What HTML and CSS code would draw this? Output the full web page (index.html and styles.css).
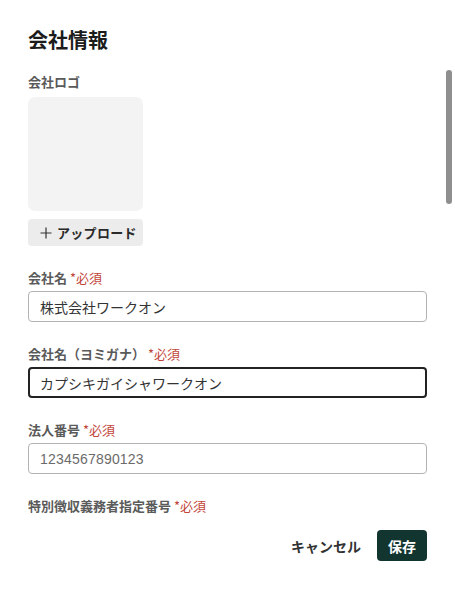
FILE: index.html
```html
<!DOCTYPE html>
<html lang="ja">
<head>
<meta charset="utf-8">
<link rel="stylesheet" href="styles.css">
</head>
<body>
<div class="panel">
  <h1 class="title">会社情報</h1>
  <div class="label label-logo">会社ロゴ</div>
  <div class="logo-box"></div>
  <button class="upload-btn" type="button">
    <svg class="plus" width="12" height="12" viewBox="0 0 12 12"><path d="M6 0.5V11.5M0.5 6H11.5" stroke="#333" stroke-width="1.2" fill="none"/></svg>
    <span>アップロード</span>
  </button>

  <div class="field">
    <div class="label">会社名 <span class="req">*必須</span></div>
    <div class="input">株式会社ワークオン</div>
  </div>
  <div class="field">
    <div class="label">会社名（ヨミガナ） <span class="req">*必須</span></div>
    <div class="input input-focus">カプシキガイシャワークオン</div>
  </div>
  <div class="field">
    <div class="label">法人番号 <span class="req">*必須</span></div>
    <div class="input input-muted">1234567890123</div>
  </div>
  <div class="field">
    <div class="label">特別徴収義務者指定番号 <span class="req">*必須</span></div>
  </div>

  <div class="actions">
    <button class="cancel-btn" type="button">キャンセル</button>
    <button class="save-btn" type="button">保存</button>
  </div>
  <div class="scrollbar"></div>
</div>
</body>
</html>
```

FILE: styles.css
```css
* { box-sizing: border-box; }
html, body {
  margin: 0;
  padding: 0;
  background: #ffffff;
}
body {
  font-family: "Noto Sans CJK JP", "Noto Sans", sans-serif;
  color: #333;
}
.panel {
  position: relative;
  width: 455px;
  height: 590px;
  padding: 26px 28px 0 28px;
  display: flex;
  flex-direction: column;
  align-items: flex-start;
}
.title {
  margin: 0;
  font-size: 20px;
  line-height: 28px;
  font-weight: 700;
  color: #1c1c1c;
}
.label {
  font-size: 13px;
  line-height: 18px;
  font-weight: 700;
  color: #5a5a5a;
}
.label-logo {
  margin-top: 19px;
}
.req {
  color: #c2453a;
  font-weight: 400;
}
.logo-box {
  margin-top: 6px;
  width: 115px;
  height: 114px;
  background: #f3f3f3;
  border-radius: 7px;
}
.upload-btn {
  margin-top: 8px;
  width: 115px;
  height: 27px;
  border: none;
  border-radius: 4px;
  background: #ececec;
  display: flex;
  align-items: center;
  gap: 5px;
  padding: 0 0 0 12px;
  font-family: inherit;
  font-size: 13px;
  font-weight: 700;
  color: #2a2a2a;
  letter-spacing: 0.3px;
}
.plus { flex: none; }
.field {
  margin-top: 23px;
  width: 100%;
  display: flex;
  flex-direction: column;
  gap: 4px;
}
.input {
  height: 31px;
  width: 100%;
  border: 1px solid #b3b3b3;
  border-radius: 4px;
  padding: 0 11px;
  display: flex;
  align-items: center;
  font-size: 14px;
  color: #333;
}
.input-focus {
  border: 2px solid #222;
  padding: 0 10px;
}
.input-muted {
  font-family: "Liberation Sans", "Noto Sans CJK JP", sans-serif;
  color: #6b6b6b;
  letter-spacing: 0.2px;
}
.actions {
  margin-top: 15px;
  width: 100%;
  display: flex;
  justify-content: flex-end;
  align-items: center;
  gap: 16px;
}
.cancel-btn {
  border: none;
  background: none;
  padding: 0;
  font-family: inherit;
  font-size: 14px;
  font-weight: 700;
  color: #333;
}
.save-btn {
  height: 31px;
  width: 50px;
  border: none;
  border-radius: 4px;
  background: #133530;
  color: #fff;
  font-family: inherit;
  font-size: 14px;
  font-weight: 700;
  padding: 0;
}
.scrollbar {
  position: absolute;
  left: 446px;
  top: 70px;
  width: 6px;
  height: 134px;
  border-radius: 3px;
  background: #8f8f8f;
}
```
